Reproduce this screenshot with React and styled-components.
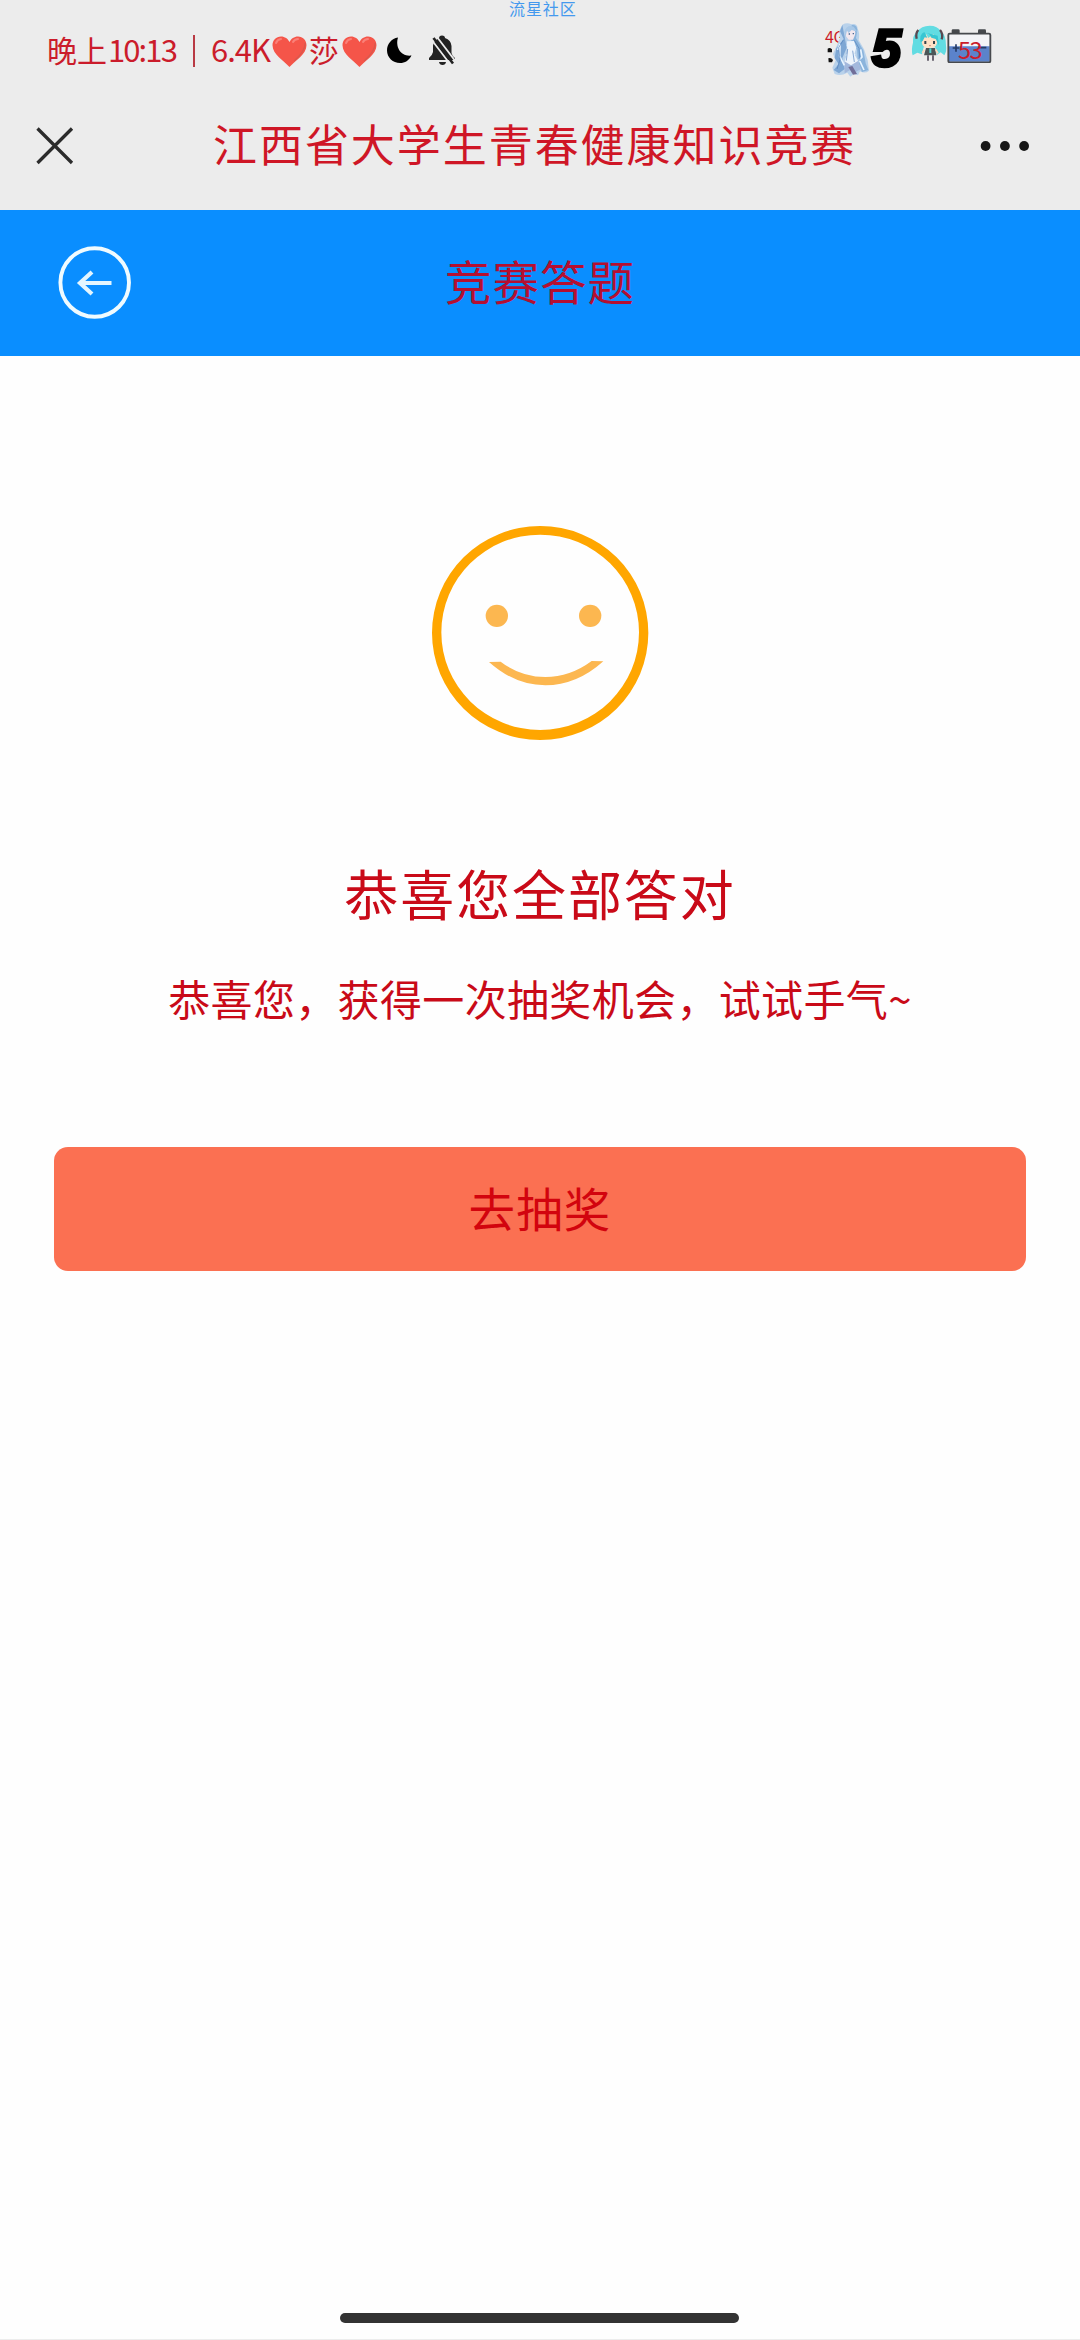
import React from "react";
import styled, { createGlobalStyle } from "styled-components";

const GlobalStyle = createGlobalStyle`
  * { box-sizing: border-box; }
  body { margin: 0; background: #fefefe; }
  h1, h2, p { margin: 0; font-weight: 400; }
  button { border: 0; padding: 0; background: none; font: inherit; }
  svg { display: block; flex: none; }
`;

const Screen = styled.div`
  width: 1080px;
  height: 2340px;
  display: flex;
  flex-direction: column;
  background: #fefefe;
  border-bottom: 1px solid #ececec;
  font-family: "Noto Sans CJK SC", "Noto Sans", sans-serif;
  color: #c90a18;
`;

const Watermark = styled.div`
  position: absolute;
  top: 0;
  left: 509px;
  font-size: 16px;
  line-height: 16px;
  letter-spacing: 0.9px;
  color: #4499ee;
`;

const StatusBar = styled.header`
  height: 100px;
  padding-left: 47px;
  display: flex;
  align-items: flex-start;
  background: #ececec;
  color: #cb1c2b;
`;

const StatusLeft = styled.div`
  width: 778px;
  height: 100px;
  display: flex;
  align-items: center;
`;

const StatusText = styled.span`
  width: ${(p) => p.$w}px;
  margin-left: ${(p) => p.$gap || 0}px;
  padding-bottom: 3px;
  font-size: ${(p) => p.$size || 30}px;
  letter-spacing: ${(p) => p.$track || 0}px;
  line-height: 40px;
  white-space: nowrap;
`;

const Divider = styled.span`
  width: 2px;
  height: 32px;
  margin: 2px 16px 0 16px;
  background: #b93a44;
`;

const IconBox = styled.span`
  margin-left: ${(p) => p.$gap || 0}px;
  padding-top: ${(p) => p.$drop || 0}px;
`;

const StatusRight = styled.div`
  display: flex;
  align-items: flex-start;
  padding-top: 22px;
`;

const Signal = styled.div`
  position: relative;
  width: 47px;
  height: 56px;
`;

const NetworkLabel = styled.span`
  position: absolute;
  left: 0;
  top: 6px;
  font-size: 16px;
  line-height: 16px;
  letter-spacing: -0.5px;
`;

const Figure = styled.div`
  position: absolute;
  left: 2px;
  top: 0;
`;

const SignalGrade = styled.span`
  width: 36px;
  height: 56px;
  margin-right: 3px;
  font-family: "Liberation Sans", sans-serif;
  font-size: 52px;
  font-weight: 700;
  font-style: italic;
  line-height: 53px;
  color: #000;
  -webkit-text-stroke: 3.5px #000;
`;

const Battery = styled.div`
  position: relative;
  margin-top: 7px;
`;

const BatteryLevel = styled.span`
  position: absolute;
  left: 11px;
  top: 8px;
  font-size: 23.5px;
  line-height: 24px;
  letter-spacing: -1.5px;
`;

const NavBar = styled.nav`
  height: 110px;
  display: grid;
  grid-template-columns: 177px 1fr 50px;
  padding: 0 50px 18px 36px;
  align-items: center;
  background: #ececec;
`;

const NavTitle = styled.h1`
  padding-bottom: 6px;
  font-size: 44px;
  line-height: 60px;
  letter-spacing: 1.95px;
  color: #cf1626;
`;

const PageHeader = styled.div`
  height: 146px;
  padding: 0 58px;
  display: grid;
  grid-template-columns: 74px 1fr 74px;
  align-items: center;
  background: #0a8eff;
`;

const PageTitle = styled.h2`
  padding-bottom: 6px;
  font-size: 46.5px;
  line-height: 64px;
  letter-spacing: 1px;
  text-align: center;
  color: #b50f31;
`;

const Result = styled.main`
  flex: 1;
  display: flex;
  flex-direction: column;
  align-items: center;
  padding: 170px 54px 0;
`;

const ResultTitle = styled.h2`
  margin-top: 113px;
  font-size: 54px;
  line-height: 80px;
  letter-spacing: 1.9px;
`;

const ResultText = styled.p`
  margin-top: 35px;
  font-size: 42px;
  line-height: 60px;
  letter-spacing: 0.35px;
  white-space: nowrap;
`;

const DrawButton = styled.button`
  align-self: stretch;
  height: 124px;
  margin-top: 119px;
  padding-bottom: 5px;
  border-radius: 14px;
  background: #fb7052;
  color: #d2040e;
  font-size: 46.5px;
  letter-spacing: 1.2px;
`;

const HomeIndicator = styled.div`
  width: 399px;
  height: 10px;
  margin: 0 0 16px 340px;
  border-radius: 5px;
  background: #333;
`;

const Heart = () => (
  <svg width="35" height="31" viewBox="0 0 35 31">
    <path d="M17.500 31C12 24.500 0.500 18.500 0.500 9.200C0.500 4 4.200 0.400 9 0.400C12.800 0.400 16 2.600 17.500 6C19 2.600 22.200 0.400 26 0.400C30.800 0.400 34.500 4 34.500 9.200C34.500 18.500 23 24.500 17.500 31Z" fill="#f55549" />
    <path d="M33.200 7C33 13 29 19 22 25" fill="none" stroke="#d9584d" strokeWidth="1.300" />
    <path d="M4 7Q5.500 3.300 9 3M21 6Q22.500 3.300 26 3" fill="none" stroke="#fa8078" strokeWidth="2" strokeLinecap="round" />
  </svg>
);

const Moon = () => (
  <svg width="25" height="26" viewBox="0 0 25 26">
    <path d="M11 0.500C8 10 14 20 24.500 18.500C22 23.500 18 26 13 26C6 26 0 20.500 0 13.500C0 7 4.500 1.500 11 0.500Z" fill="#000" />
  </svg>
);

const MutedBell = () => (
  <svg width="27" height="31" viewBox="0 0 27 31">
    <path d="M10 3.500Q10 0.500 13 0.500Q16 0.500 16 3Q22 5 22.500 11V18Q23 21 26 23V25H0V23Q3.500 20 4 17V10.500Q5 5 10 3.500Z" fill="#222" />
    <path d="M10 27H17Q16.500 30 13.500 30Q10.500 30 10 27Z" fill="#222" />
    <path d="M2 4L21 29M8 2L27 27" stroke="#ececec" strokeWidth="1.800" />
    <path d="M4.500 3L24 28.500" stroke="#222" strokeWidth="2.600" />
  </svg>
);

const SnowSinger = () => (
  <svg width="42" height="56" viewBox="52 34 126 168">
    <path d="M54 114Q60 109 67 116V125H54ZM56 143Q64 139 70 148L67 155H57Z" fill="#111" />
    <path d="M98 42Q112 34 125 41Q143 37 144 54Q151 67 147 88L163 116L174 148L178 180Q166 190 151 182L145 194L133 190L122 198L113 186Q93 198 75 190L68 171L78 149L70 130L81 106L91 82L89 60Z" fill="#b9d2eb" />
    <path d="M98 43L91 62L102 85L80 113L75 142L87 160L72 178L88 188L105 175L98 142L111 112L105 78Z" fill="#7ea7d4" />
    <path d="M126 43Q142 41 143 58L139 82L161 119L168 158L176 178L157 184L145 154L142 117L125 90Z" fill="#8bb4dc" />
    <path d="M110 56Q118 47 128 55Q140 58 136 73L130 87H117L108 75Z" fill="#f3e8ee" />
    <path d="M104 63Q111 41 132 48L143 63L126 58L117 67L112 60L107 80Z" fill="#a9c8e7" />
    <path d="M112 92L133 91L140 111L134 130L147 154L124 171L103 158L113 128Z" fill="#eef4fb" />
    <path d="M104 152L124 164L145 151L154 175L138 184L121 178L105 188Z" fill="#a3b8dc" />
    <path d="M116 169L128 166L142 190L130 192Z" fill="#716e99" />
    <path d="M84 118L91 100L90 136L104 164M153 116L157 139L149 148L163 178M112 103L122 108L134 101M109 132L122 143L136 130" fill="none" stroke="#e8f4ff" strokeWidth="5" />
    <path d="M101 88L87 111L91 147L82 175M134 89L148 113L151 151M114 115L110 150M129 120L134 154" fill="none" stroke="#5280bd" strokeWidth="2" />
    <path d="M117 70H121M129 69H133" stroke="#496793" strokeWidth="4" />
  </svg>
);

const ChibiSinger = () => (
  <svg width="36" height="37" viewBox="302 46 108 111">
    <path d="M320 66Q333 48 358 48Q382 48 392 65Q407 75 407 107Q410 125 402 137L391 128L380 136L375 113H340L335 134L321 129L307 137Q302 120 308 99Q306 78 320 66Z" fill="#62dce2" />
    <path d="M324 61Q315 70 319 87M389 61Q399 72 394 89" fill="none" stroke="#5a4850" strokeWidth="7" />
    <path d="M334 85L348 74L354 85L369 73L381 89Q383 115 359 116Q336 116 334 96Z" fill="#ffe1c6" />
    <path d="M331 98Q326 74 342 67L351 84L343 83L337 94ZM350 70L382 78L386 107L376 88L363 84L357 74Z" fill="#38c6d2" />
    <path d="M345 94V103M371 94V103" stroke="#33434b" strokeWidth="6" />
    <path d="M356 108H362" stroke="#b86761" strokeWidth="2" />
    <path d="M347 115H374L378 137H341Z" fill="#4b5556" />
    <path d="M357 116H363V130H357Z" fill="#55d0ce" />
    <path d="M342 120L336 130M376 119L383 131" stroke="#ffd6b7" strokeWidth="5" />
    <path d="M353 137V153M368 137V153" stroke="#514a59" strokeWidth="5" />
  </svg>
);

const BatteryShell = () => (
  <svg width="45" height="34" viewBox="410 56 135 102">
    <rect x="424" y="57" width="24" height="14" rx="4" fill="#46494d" />
    <rect x="503" y="57" width="24" height="14" rx="4" fill="#46494d" />
    <rect x="414" y="70" width="126" height="86" rx="4" fill="#f3f4f7" />
    <path d="M416 108H538V154H416Z" fill="#5b83cb" />
    <rect x="414" y="70" width="126" height="86" rx="4" fill="none" stroke="#46494d" strokeWidth="5.500" />
    <path d="M427 113H447M437 102V124M504 112H528" stroke="#263c66" strokeWidth="5" />
  </svg>
);

const CloseIcon = () => (
  <svg width="38" height="38" viewBox="0 0 38 38">
    <path d="M1.500 1.500L36 36M36 1.500L1.500 36" stroke="#2b2b2b" strokeWidth="3.300" />
  </svg>
);

const MoreIcon = () => (
  <svg width="50" height="12" viewBox="0 0 50 12">
    <circle cx="5.600" cy="6" r="4.900" fill="#171717" />
    <circle cx="24.900" cy="6" r="4.900" fill="#171717" />
    <circle cx="44.100" cy="6" r="4.900" fill="#171717" />
  </svg>
);

const BackIcon = () => (
  <svg width="74" height="74" viewBox="0 0 74 74">
    <circle cx="36.700" cy="36.500" r="34.300" fill="none" stroke="#f0fbff" strokeWidth="3.900" />
    <path d="M53.500 37H22M34 26L22 37L34 48" fill="none" stroke="#e4f6ff" strokeWidth="4.200" />
  </svg>
);

const Smiley = () => (
  <svg width="217" height="214" viewBox="66 78 651 642">
    <path fillRule="evenodd" d="M66 399A324.500 321 0 0 1 715 399A324.500 321 0 0 1 66 399ZM94 397A296.500 293 0 0 0 687 397A296.500 293 0 0 0 94 397Z" fill="#ffa600" />
    <circle cx="260.500" cy="347.500" r="33.500" fill="#fcb750" />
    <circle cx="540.500" cy="347.500" r="33.500" fill="#fcb750" />
    <path d="M237 486L272 485Q332 531 406 531Q480 531 545 483L580 484Q500 556 406 556Q315 556 237 486Z" fill="#fcb750" />
  </svg>
);

export default function App() {
  return (
    <Screen>
      <GlobalStyle />
      <Watermark>流星社区</Watermark>
      <StatusBar>
        <StatusLeft>
          <StatusText $w={61}>晚上</StatusText>
          <StatusText $w={69} $size={31} $track={-1.9}>10:13</StatusText>
          <Divider />
          <StatusText $w={60} $size={31} $track={-1}>6.4K</StatusText>
          <IconBox $gap={1} $drop={3}><Heart /></IconBox>
          <StatusText $w={29} $gap={2}>莎</StatusText>
          <IconBox $gap={4} $drop={3}><Heart /></IconBox>
          <IconBox $gap={10}><Moon /></IconBox>
          <IconBox $gap={17}><MutedBell /></IconBox>
        </StatusLeft>
        <StatusRight>
          <Signal>
            <NetworkLabel>4G</NetworkLabel>
            <Figure><SnowSinger /></Figure>
          </Signal>
          <SignalGrade>5</SignalGrade>
          <IconBox $drop={3}><ChibiSinger /></IconBox>
          <Battery>
            <BatteryShell />
            <BatteryLevel>53</BatteryLevel>
          </Battery>
        </StatusRight>
      </StatusBar>
      <NavBar>
        <CloseIcon />
        <NavTitle>江西省大学生青春健康知识竞赛</NavTitle>
        <MoreIcon />
      </NavBar>
      <PageHeader>
        <BackIcon />
        <PageTitle>竞赛答题</PageTitle>
      </PageHeader>
      <Result>
        <Smiley />
        <ResultTitle>恭喜您全部答对</ResultTitle>
        <ResultText>恭喜您，获得一次抽奖机会，试试手气~</ResultText>
        <DrawButton>去抽奖</DrawButton>
      </Result>
      <HomeIndicator />
    </Screen>
  );
}
